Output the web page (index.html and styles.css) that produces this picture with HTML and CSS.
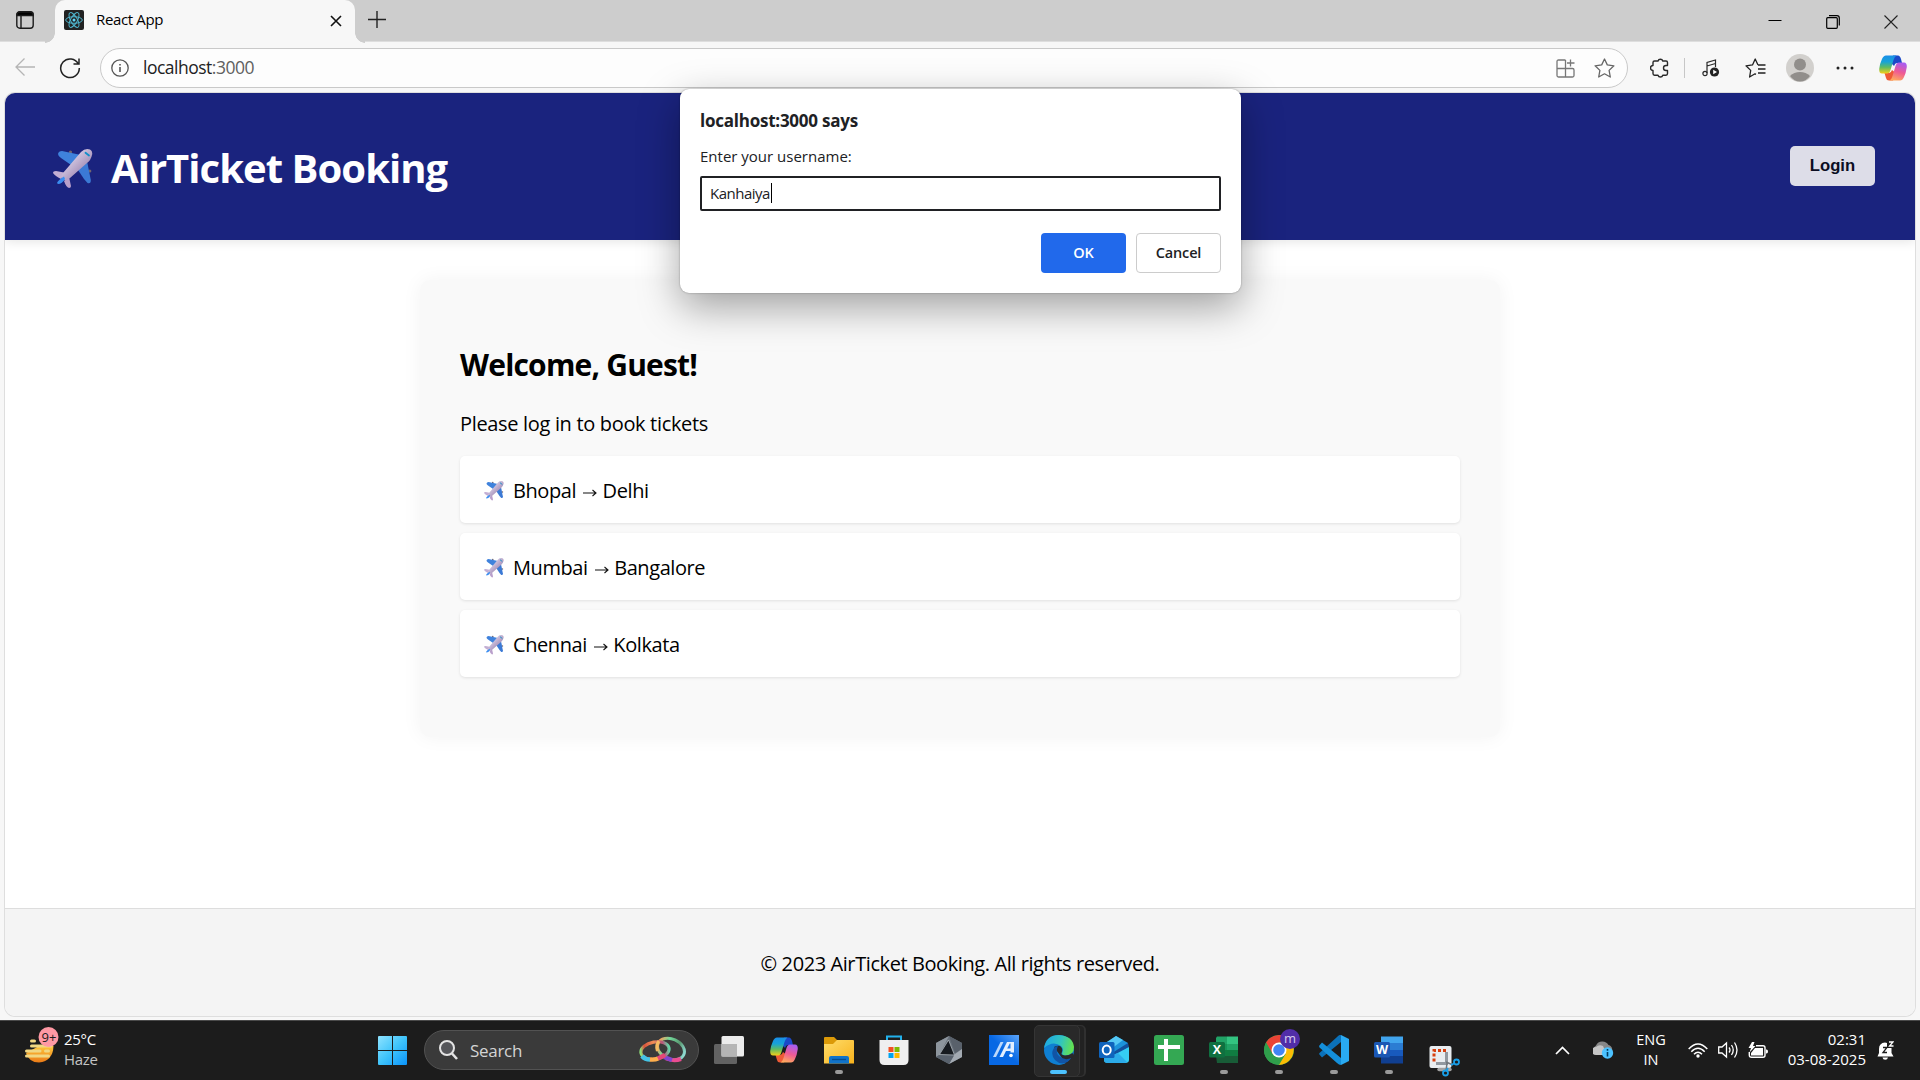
FILE: index.html
```html
<!DOCTYPE html>
<html lang="en">
<head>
<meta charset="utf-8">
<title>React App</title>
<link rel="stylesheet" href="styles.css">
</head>
<body>
<svg class="defs" width="0" height="0">
  <defs>
    <linearGradient id="body" x1="0" y1="0" x2="1" y2="1"><stop offset="0.3" stop-color="#d6cbe4"/><stop offset="0.7" stop-color="#a48fb8"/></linearGradient>
    <linearGradient id="cpA" x1="0" y1="0" x2="0" y2="1"><stop offset="0" stop-color="#1a8ee8"/><stop offset=".35" stop-color="#17a3d8"/><stop offset=".65" stop-color="#5dbb63"/><stop offset="1" stop-color="#f4cf19"/></linearGradient>
    <linearGradient id="cpB" x1=".6" y1="0" x2=".3" y2="1"><stop offset="0" stop-color="#a95df0"/><stop offset=".5" stop-color="#ef5a94"/><stop offset="1" stop-color="#ffab5c"/></linearGradient>
    <symbol id="plane" viewBox="0 0 40 40">
      <circle cx="17.500" cy="3" r="1.600" fill="#71656f"/><circle cx="36.800" cy="22" r="1.600" fill="#71656f"/>
      <path d="M5 5Q5.500 2 9 2L28 6 21 18 8 9Q5 7 5 5Z" fill="#3f82dc"/>
      <path d="M34 12 37.800 31Q38 35 34.500 34L31 30 23 18Z" fill="#3b79d5"/>
      <path d="M0 24Q0 22 3 22L11 23.500 8 30Q2 27 0 24Z" fill="#c2aed3"/>
      <path d="M11 32 16 28 18 37Q18 39 16 39 13 38 11 32Z" fill="#b99fcb"/>
      <path d="M28 3Q32-1 37 .500 40 2 39 6 38 11 34 14L17 29Q13 32 9 31 7 28 10 24Z" fill="url(#body)"/>
      <path d="M4 34Q5 31 11 27.500L12 30Q9 35 5 35Z" fill="#3a8df0"/>
      <path d="M32.500 3.800 36 6.500" stroke="#128fc9" stroke-width="1.800" stroke-linecap="round"/>
    </symbol>
    <symbol id="copilot" viewBox="0 0 28 26">
      <path d="M14 .500H19Q21 .500 22 4L23 8H18Q16 8 15 11L11 7Z" fill="#1b49c8"/>
      <path d="M14 25.500H10Q7.500 25.500 7 23L5.500 18H10Q12 18 13 15L18 19Z" fill="#ee5a36"/>
      <path d="M7 .500H17.500Q15.500 1.500 14.500 5L11.500 15Q10.500 18.500 8 18.500H3Q0 18.500 .200 14 1 8 3 4 4.500 .500 7 .500Z" fill="url(#cpA)"/>
      <path d="M21 25.500H10.500Q12.500 24.500 13.500 21L16.500 11Q17.500 7.500 20 7.500H25Q28 7.500 27.800 12 27 18 25 22 23.500 25.500 21 25.500Z" fill="url(#cpB)"/>
    </symbol>
  </defs>
</svg>

<header class="tabstrip">
  <div class="tab-actions">
    <svg width="18" height="18" viewBox="0 0 18 18" fill="none" stroke="#1b1b1b" stroke-width="1.400"><rect x=".8" y=".8" width="16.400" height="16.400" rx="3"/><path d="M1 3.500Q1 1 4 1H14Q17 1 17 3.500V4.500H1Z" fill="#000"/><path d="M5 5V17"/></svg>
  </div>
  <div class="tab">
    <svg class="favicon" width="20" height="20" viewBox="0 0 20 20"><rect width="20" height="20" rx="2" fill="#222"/><g fill="none" stroke="#4fb4cc" stroke-width="1"><ellipse cx="10" cy="10" rx="8.300" ry="3.300"/><ellipse cx="10" cy="10" rx="8.300" ry="3.300" transform="rotate(60 10 10)"/><ellipse cx="10" cy="10" rx="8.300" ry="3.300" transform="rotate(120 10 10)"/></g><circle cx="10" cy="10" r="1.500" fill="#61dafb"/></svg>
    <span class="tab-title">React App</span>
    <svg class="tab-close" width="12" height="12" viewBox="0 0 12 12" stroke="#111" stroke-width="1.600"><path d="M1 1 11 11M11 1 1 11"/></svg>
  </div>
  <svg class="new-tab" width="18" height="18" viewBox="0 0 18 18" stroke="#222" stroke-width="1.400"><path d="M9 0V17M0 8.500H18"/></svg>
  <div class="window-controls">
    <svg width="14" height="14" viewBox="0 0 14 14" fill="none" stroke="#000"><path d="M.500 5.500H13.500"/></svg>
    <svg width="14" height="14" viewBox="0 0 14 14" fill="none" stroke="#000" stroke-width="1.200"><rect x=".7" y="2.700" width="10.600" height="10.600" rx="1"/><path d="M3 .7H11Q13.300 .7 13.300 3V10.500"/></svg>
    <svg width="14" height="14" viewBox="0 0 14 14" fill="none" stroke="#222" stroke-width="1.100"><path d="M.500 .500 13.500 13.500M13.500 .500 .500 13.500"/></svg>
  </div>
</header>

<nav class="toolbar">
  <svg class="back" width="20" height="18" viewBox="0 0 20 18" fill="none" stroke="#b5b5b5" stroke-width="1.300"><path d="M20 9H1M9.500 .500 1 9 9.500 17.500"/></svg>
  <svg class="reload" width="22" height="22" viewBox="0 0 22 22" fill="none" stroke="#222" stroke-width="1.500"><path d="M19.300 7A9.300 9.300 0 1 0 20.300 11M20 1.500V7H14.500"/></svg>
  <div class="address">
    <svg width="18" height="18" viewBox="0 0 18 18" fill="none" stroke="#555" stroke-width="1.300"><circle cx="9" cy="9" r="8.200"/><path d="M9 8V13M9 5V6.500" stroke-width="1.600"/></svg>
    <span class="url">localhost<span class="port">:3000</span></span>
    <svg class="apps" width="19" height="19" viewBox="0 0 19 19" fill="none" stroke="#777" stroke-width="1.300"><path d="M9.500 1H2.500Q1 1 1 2.500V16.500Q1 18 2.500 18H16.500Q18 18 18 16.500V11Q18 9.500 16.500 9.500H1M9.500 1V18M14.500 .500V7.500M11 4H18.500"/></svg>
    <svg class="star" width="21" height="20" viewBox="0 0 21 20" fill="none" stroke="#666" stroke-width="1.300" stroke-linejoin="round"><path d="M10.500 1 13.300 6.900 19.900 7.800 15.100 12.400 16.300 19 10.500 15.800 4.700 19 5.900 12.400 1.100 7.800 7.700 6.900Z"/></svg>
  </div>
  <div class="tools">
    <svg width="20" height="20" viewBox="0 0 20 20" fill="none" stroke="#2a2a2a" stroke-width="1.400" stroke-linejoin="round"><path d="M4.500 3H8A2.500 2.500 0 0 1 12.800 3H16Q17.500 3 17.500 4.500V7.500H16A2.500 2.500 0 0 0 16 12.500H17.500V15.500Q17.500 17.200 16 17.200H12.800A2.500 2.500 0 0 1 8 17.200H4.500Q3 17.200 3 15.500V12.500A2.500 2.500 0 0 1 3 7.500V4.500Q3 3 4.500 3Z"/></svg>
    <i class="divider"></i>
    <svg class="music" width="18" height="18" viewBox="0 0 18 18" fill="none" stroke="#2a2a2a" stroke-width="1.200"><path d="M5 14V3.500L13.500 1V8M5 7 13.500 4.500"/><circle cx="3" cy="14.500" r="2.100"/><circle cx="12.500" cy="13" r="4.600" fill="#222" stroke="none"/><path d="M11.200 10.800 15 13 11.200 15.200Z" fill="#fff" stroke="none"/></svg>
    <svg class="favs" width="21" height="20" viewBox="0 0 21 20" fill="none" stroke="#222" stroke-width="1.300" stroke-linejoin="round"><path d="M13 7 10.200 1 7.500 6.900 1 7.800 5.700 12.400 4.600 19 10 15.800 11 16.300M13 11H20.500M13 15H20.500M13 7H20.500"/></svg>
    <svg class="avatar" width="28" height="28" viewBox="0 0 28 28"><circle cx="14" cy="14" r="14" fill="#d2d0cd"/><circle cx="14" cy="10.500" r="6" fill="#918e8b"/><path d="M4 22Q8 18 14 18T24 22Q20 27.500 14 27.500T4 22Z" fill="#918e8b"/></svg>
    <svg class="more" width="18" height="4" viewBox="0 0 18 4" fill="#222"><circle cx="2" cy="2" r="1.500"/><circle cx="9" cy="2" r="1.500"/><circle cx="16" cy="2" r="1.500"/></svg>
    <svg class="copilot" width="28" height="26"><use href="#copilot"/></svg>
  </div>
</nav>

<main class="viewport">
  <section class="page">
    <header class="app-header">
      <h1 class="brand"><svg width="40" height="40"><use href="#plane"/></svg><span>AirTicket Booking</span></h1>
      <button class="login">Login</button>
    </header>
    <div class="content">
      <article class="card">
        <h2>Welcome, Guest!</h2>
        <p>Please log in to book tickets</p>
        <ul class="flights">
          <li><svg width="20" height="20"><use href="#plane"/></svg><span>Bhopal</span><svg class="arrow" width="14" height="8" viewBox="0 0 14 8"><path d="M0 4H12.500M9.500 1 13 4 9.500 7" fill="none" stroke="#111" stroke-width="1.100"/></svg><span>Delhi</span></li>
          <li><svg width="20" height="20"><use href="#plane"/></svg><span>Mumbai</span><svg class="arrow" width="14" height="8" viewBox="0 0 14 8"><path d="M0 4H12.500M9.500 1 13 4 9.500 7" fill="none" stroke="#111" stroke-width="1.100"/></svg><span>Bangalore</span></li>
          <li><svg width="20" height="20"><use href="#plane"/></svg><span>Chennai</span><svg class="arrow" width="14" height="8" viewBox="0 0 14 8"><path d="M0 4H12.500M9.500 1 13 4 9.500 7" fill="none" stroke="#111" stroke-width="1.100"/></svg><span>Kolkata</span></li>
        </ul>
      </article>
    </div>
    <footer class="app-footer">© 2023 AirTicket Booking. All rights reserved.</footer>
  </section>
</main>

<div class="dialog" role="dialog">
  <div class="dialog-title">localhost:3000 says</div>
  <div class="dialog-message">Enter your username:</div>
  <div class="dialog-input"><span>Kanhaiya</span><i class="caret"></i></div>
  <div class="dialog-buttons"><button class="ok">OK</button><button class="cancel">Cancel</button></div>
</div>

<footer class="taskbar">
  <div class="weather">
    <svg width="34" height="36" viewBox="0 0 34 36"><defs><linearGradient id="sun" x1="0" y1="0" x2="0" y2="1"><stop offset="0" stop-color="#ffc83d"/><stop offset="1" stop-color="#ea7a17"/></linearGradient></defs><path d="M1 26Q4 35.500 14 35.500 28 34 28.500 19H14Z" fill="url(#sun)"/><g stroke="#f1d782" stroke-width="3" stroke-linecap="round"><path d="M6.500 14H9.500M6.500 19H26M1.500 24H15M20.500 24H23.500M1.500 29H23.500"/></g><circle cx="23.500" cy="10" r="10" fill="#ff99a4"/></svg>
    <span class="badge">9+</span>
    <div class="weather-text"><span>25°C</span><span class="haze">Haze</span></div>
  </div>
  <svg class="start" width="29" height="29" viewBox="0 0 29 29"><defs><linearGradient id="win" x1="0" y1="0" x2="1" y2="1"><stop offset="0" stop-color="#8fe3ff"/><stop offset=".5" stop-color="#3fc4fb"/><stop offset="1" stop-color="#0a93fa"/></linearGradient></defs><path d="M0 1Q0 0 1 0H14V14H0ZM15 0H28Q29 0 29 1V14H15ZM0 15H14V29H1Q0 29 0 28ZM15 15H29V28Q29 29 28 29H15Z" fill="url(#win)"/></svg>
  <div class="search">
    <svg width="19" height="20" viewBox="0 0 19 20" fill="#55565a" stroke="#e4e4e4" stroke-width="2"><circle cx="8" cy="8" r="7"/><path d="M13 13.500 18 19" stroke-width="2.600"/></svg>
    <span>Search</span>
    <svg class="rings" width="48" height="28" viewBox="0 0 48 28" fill="none"><defs><linearGradient id="r1"><stop offset="0" stop-color="#8fdc78"/><stop offset=".15" stop-color="#d8543c"/><stop offset=".5" stop-color="#ef8e58"/><stop offset=".8" stop-color="#b9537a"/><stop offset="1" stop-color="#62d6a6"/></linearGradient><linearGradient id="r2"><stop offset="0" stop-color="#f6a05b"/><stop offset=".3" stop-color="#72d99b"/><stop offset=".7" stop-color="#5a9a72"/><stop offset="1" stop-color="#8ed9cf"/></linearGradient></defs><ellipse cx="32" cy="13" rx="14" ry="10" transform="rotate(24 32 13)" stroke="url(#r2)" stroke-width="3"/><path d="M27 22.500Q35 25.500 42 23" stroke="#ea4d91" stroke-width="4"/><path d="M25 21 33 24" stroke="#8045cf" stroke-width="4.500"/><ellipse cx="16" cy="14.500" rx="14.200" ry="8.500" transform="rotate(-10 16 14.500)" stroke="url(#r1)" stroke-width="3.200"/><path d="M3 20Q6 23.500 11 23.500" stroke="#43c4e6" stroke-width="4.500"/><path d="M11 23.500Q16 24 19 22.500" stroke="#ffaf4d" stroke-width="4.500"/><path d="M19 22.500 26 19" stroke="#e54778" stroke-width="4.500"/><path d="M18.500 15Q16.500 9 20 5" stroke="#f4bb62" stroke-width="3.200"/></svg>
  </div>
  <div class="apps-row">
    <div class="app"><svg width="30" height="28" viewBox="0 0 30 28"><rect y="8" width="23" height="20" rx="1.500" fill="#626262"/><rect x="7.500" width="22.500" height="20.500" rx="1.500" fill="#ececec"/><path d="M7.500 8H23V20.500H7.500Z" fill="#b5b5b5"/></svg></div>
    <div class="app"><svg width="28" height="26"><use href="#copilot"/></svg></div>
    <div class="app run"><svg width="30" height="28" viewBox="0 0 30 28"><defs><linearGradient id="fold" x1="0" y1="0" x2="1" y2="1"><stop offset="0" stop-color="#ffdd6b"/><stop offset="1" stop-color="#f8b21c"/></linearGradient></defs><path d="M0 2Q0 1 1 1H10L13 4V10H0Z" fill="#dc9a08"/><path d="M0 8H9L13 4H29Q30 4 30 5V27.500H0Z" fill="url(#fold)"/><path d="M5 27.500V22Q5 20 7 20H23Q25 20 25 22V27.500Z" fill="#1173c9"/><path d="M8 23.500H22" stroke="#064d90" stroke-width="1.300"/></svg></div>
    <div class="app"><svg width="30" height="30" viewBox="0 0 30 30"><path d="M8 7V1.500H22V7" fill="none" stroke="#22b1ec" stroke-width="2"/><path d="M.500 5H29.500V25Q29.500 30 24.500 30H5.500Q.500 30 .500 25Z" fill="#efefef"/><path d="M9.500 12H14.500V17H9.500Z" fill="#f25022"/><path d="M15.500 12H20.500V17H15.500Z" fill="#7fba00"/><path d="M9.500 18H14.500V23H9.500Z" fill="#00a4ef"/><path d="M15.500 18H20.500V23H15.500Z" fill="#ffb900"/></svg></div>
    <div class="app"><svg width="26" height="28" viewBox="0 0 26 28"><path d="M13 0 26 7V21L13 28 0 21V7Z" fill="#68717b"/><path d="M13 0 0 7V21L3.500 18.500Z" fill="#8d959d"/><path d="M13 0 26 7V13L19 17Z" fill="#59616b"/><path d="M26 13V21L13 28 19 18Z" fill="#a3aab2"/><path d="M0 21 3.500 19 18 19 13 28Z" fill="#59626d"/><path d="M12.500 4 3.500 18.500 18.500 19Z" fill="#171b20" stroke="#b9c0c6" stroke-width=".7"/></svg></div>
    <div class="app"><svg width="30" height="30" viewBox="0 0 30 30"><defs><linearGradient id="asus" x1="0" y1="1" x2="1" y2="0"><stop offset=".5" stop-color="#0768e4"/><stop offset="1" stop-color="#5ba4f8"/></linearGradient></defs><path d="M0 0H30V30H0Z" fill="url(#asus)"/><path d="M4 22 11.500 7H14.500L7 22Z" fill="#bcd8fb"/><path d="M10.500 22 18 7H25V17.500H21.500V16H17L14 22ZM18.200 13.500H21.500V8.500H20.700Z" fill="#e3efff"/><circle cx="22" cy="20.500" r="1.800" fill="#fff"/></svg></div>
    <div class="app active"><svg width="30" height="30" viewBox="0 0 30 30"><defs><linearGradient id="eg" y1=".3" y2=".5"><stop offset="0" stop-color="#1da7e5"/><stop offset=".55" stop-color="#32c5be"/><stop offset="1" stop-color="#66e34a"/></linearGradient></defs><circle cx="15" cy="15" r="15" fill="#0f7fd2"/><path d="M0 13Q2 0 15 0 29 1 30 12 30 20 21 20.500 17 20 18.500 17 20 14 17 11 9 5 0 13Z" fill="url(#eg)"/><path d="M10 12Q13 10 16 11 19 13 18 17 16 20 21 20.500 25 20.500 28.500 18L30 21 28 30H23Z" fill="#292929"/><path d="M10 13Q6 19 11 25 17 31 24.500 26.500L27.500 23Q20 26 15 21 11 17 14 11Q11 11 10 13Z" fill="#1154a5"/><path d="M27.500 23Q24 28 18 30H30V20Z" fill="#292929"/></svg></div>
    <div class="app"><svg width="30" height="28" viewBox="0 0 30 28"><path d="M5 8 17 0 29 7V15L17 22 5 15Z" fill="#1c93db"/><path d="M5 8 17 0 24 4 12 13Z" fill="#54c8f5"/><path d="M13 17 29 7 30 11 17 20Z" fill="#12519e"/><path d="M30 11V24Q30 27 26 27H9Q5 27 5 24V17L13 20Z" fill="#35cdf3"/><path d="M5 22 19 17 28 26Q27 27 25 27H9Q5 27 5 24Z" fill="#2cabe9"/><rect y="6" width="15.500" height="16" rx="1.500" fill="#0f64bd"/><ellipse cx="7.700" cy="14" rx="4" ry="4.500" fill="none" stroke="#fff" stroke-width="2"/></svg></div>
    <div class="app"><svg width="30" height="30" viewBox="0 0 30 30"><rect width="30" height="30" rx="2.500" fill="#34a853"/><path d="M4 12H26M12 4V26" stroke="#fff" stroke-width="4"/></svg></div>
    <div class="app run office excel"><svg width="30" height="28" viewBox="0 0 30 28"><path d="M8 .500H18V9H7V2Z" fill="#21a366"/><path d="M18 .500H29V9H18Z" fill="#33c481"/><path d="M7 8H18V15H7Z" fill="#169457"/><path d="M18 8H29V15H18Z" fill="#21a366"/><path d="M7 14H29V21H7Z" fill="#107c41"/><path d="M7 20H29V27H8Z" fill="#185c37"/><rect y="6" width="16" height="15.500" rx="1.500" fill="#0f7040"/></svg><b>X</b></div>
    <div class="app run chrome"><svg width="30" height="30" viewBox="0 0 30 30"><circle cx="15" cy="15" r="15" fill="#34a853"/><path d="M2 7.500Q6 .500 15 0 24 0 28 7.500H15L8.500 19Z" fill="#ea4335"/><path d="M15 7.500H28Q31.500 14 28 22 23 30 14 30L21.500 19Z" fill="#fbbc04"/><path d="M2 7.500 8.500 19 15 22.500 21.500 19 15 30Q4 29.500 .500 19-.500 12 2 7.500Z" fill="#2f9e4b"/><circle cx="15" cy="15" r="7.500" fill="#fff"/><circle cx="15" cy="15" r="5.800" fill="#4285f4"/></svg><span class="profile">m</span></div>
    <div class="app run"><svg width="30" height="30" viewBox="0 0 30 30"><path d="M0 19 3 22.500 22 7V0Q20-.500 18 2L.500 18Z" fill="#0b71b9"/><path d="M0 11 3 7.500 22 23V30Q20 30 18 28L.500 12.500Z" fill="#148fda"/><path d="M22 0 30 4V26L22 30Z" fill="#29aaf2"/></svg></div>
    <div class="app run office word"><svg width="30" height="28" viewBox="0 0 30 28"><path d="M7 .500H29V8H7Z" fill="#41a5ee"/><path d="M7 7H29V15H7Z" fill="#2b7cd3"/><path d="M7 14H29V21H7Z" fill="#185abd"/><path d="M7 20H29V27.500H7Z" fill="#103f91"/><rect y="6" width="16" height="15.500" rx="1.500" fill="#1b57b4"/></svg><b>W</b></div>
    <div class="app snip"><svg width="31" height="31" viewBox="0 0 31 31"><rect x=".5" width="22" height="22" rx="2" fill="#e9edf0"/><path d="M5 15.500V4.500H17" fill="none" stroke="#d8400f" stroke-width="3" stroke-dasharray="3 2"/><path d="M10 23.500H21" stroke="#a2a2a2" stroke-width="3.500" stroke-linecap="round"/><path d="M17.500 6V18M7 17.500H19" stroke="#9299a0" stroke-width="3" fill="none"/><path d="M17 16 24 19M18 17 17 25" stroke="#70767c" stroke-width="1.500"/><g fill="none" stroke="#19a0ea" stroke-width="1.800"><circle cx="27.500" cy="16" r="2.500"/><circle cx="16.500" cy="27" r="2.500"/><path d="M25 17.500 22 19M17.500 24.500 19 22"/></g></svg></div>
  </div>
  <div class="tray">
    <svg width="15" height="9" viewBox="0 0 15 9" fill="none" stroke="#fff" stroke-width="1.700"><path d="M1 8 7.500 1.500 14 8"/></svg>
    <svg class="cloud" width="21" height="18" viewBox="0 0 21 18"><path d="M4 12A4 4 0 0 1 3 4.500 7 7 0 0 1 15.500 4 5 5 0 0 1 17 13Z" fill="#878787"/><path d="M3 14A3.500 3.500 0 0 1 3 6 6 6 0 0 1 10 5L14 14Z" fill="#c5c5c5"/><circle cx="14.500" cy="12" r="5.700" fill="#4cc2ff"/><path d="M14.500 11V15.500M14.500 8V9.700" stroke="#003d62" stroke-width="1.600"/></svg>
    <div class="lang"><span>ENG</span><span>IN</span></div>
    <svg class="wifi" width="20" height="15" viewBox="0 0 20 15" fill="none" stroke="#fff" stroke-width="1.500"><path d="M.7 6Q10-4 19.300 6M3.300 8.700Q10 1.700 16.700 8.700M6 11.300Q10 7 14 11.300"/><circle cx="10" cy="13" r="1.700" fill="#fff" stroke="none"/></svg>
    <svg class="sound" width="20" height="18" viewBox="0 0 20 18" fill="none" stroke="#fff" stroke-width="1.300"><path d="M.7 6H4L8.500 2V16L4 12H.7ZM11 6.500Q13 9 11 11.500M13.500 4Q17 9 13.500 14M16.500 1.500Q21.500 9 16.500 16.500"/></svg>
    <svg class="battery" width="20" height="17" viewBox="0 0 20 17"><path d="M8 3.700H15Q17 3.700 17 5.700V13.300Q17 15.300 15 15.300H3.500Q1.300 15.300 1.300 13V10" fill="none" stroke="#fff" stroke-width="1.400"/><path d="M7 6H15V13.500H3V11Z" fill="#fff"/><path d="M18 7.500H18.500Q20 7.500 20 9.500T18.500 11.500H18Z" fill="#fff"/><path d="M4 0 .500 6H3L1.500 10.500 7.500 4H5L6.500 0Z" fill="#fff"/></svg>
    <div class="clock"><span>02:31</span><span>03-08-2025</span></div>
    <svg class="bell" width="17" height="19" viewBox="0 0 17 19"><path d="M2 8Q2 2 8 1.500L10 2V7H14.500V12L16.500 15.500H.500L2 12ZM5.500 16.500H11Q10.500 18.800 8.200 18.800T5.500 16.500Z" fill="#fff"/><path d="M12 1H16L12.500 5H16.500" fill="none" stroke="#fff" stroke-width="1.300"/><path d="M6 6.500H10L6 11.500H10" fill="none" stroke="#1c1c1c" stroke-width="1.300"/></svg>
  </div>
</footer>
</body>
</html>
```
FILE: styles.css
```css
* { box-sizing: border-box; }
body { margin: 0; width: 1920px; height: 1080px; overflow: hidden; display: flex; flex-direction: column; background: #f7f7f7; color: #000; font-family: "Open Sans", "Noto Sans", sans-serif; font-size: 20px; }
svg { display: block; flex: none; }
.defs { position: absolute; }
button { font-family: inherit; padding: 0; }

/* Browser chrome */
.tabstrip { height: 42px; background: #cdcdcd; display: flex; flex: none; box-shadow: inset 0 -1px #dedede; }
.tab-actions { width: 55px; padding: 11px 0 0 16px; }
.tab { position: relative; width: 300px; height: 43px; background: #f7f7f7; border-radius: 10px 10px 0 0; display: flex; align-items: flex-start; padding: 10px 13px 0 9px; }
.tab::before, .tab::after { content: ""; position: absolute; bottom: 0; width: 10px; height: 10px; }
.tab::before { left: -10px; background: radial-gradient(circle at 0 0, #cdcdcd 9.5px, #f7f7f7 10px); }
.tab::after { right: -10px; background: radial-gradient(circle at 100% 0, #cdcdcd 9.5px, #f7f7f7 10px); }
.tab-title { margin: -1px 0 0 12px; font-size: 15px; line-height: 20px; letter-spacing: -.35px; }
.tab-close { margin: 5px 0 0 auto; }
.new-tab { margin: 11px 0 0 13px; }
.window-controls { margin: 15px 22px 0 auto; display: flex; gap: 44px; }
.toolbar { height: 51px; flex: none; display: flex; align-items: flex-start; padding-top: 6px; }
.back { margin: 10px 0 0 15px; }
.reload { margin: 9px 0 0 24px; }
.address { width: 1528px; height: 40px; margin-left: 19px; border: 1px solid #c9c9c9; border-radius: 20px; background: #fdfdfd; display: flex; align-items: center; padding: 0 12px 0 10px; }
.url { margin: -2px 0 0 14px; font-size: 17.5px; letter-spacing: -.5px; color: #222; }
.port { color: #606060; }
.apps { margin-left: auto; }
.star { margin-left: 19px; }
.tools { flex: 1; height: 40px; display: flex; align-items: center; padding-left: 22px; }
.divider { width: 1px; height: 20px; background: #c7c7c7; margin-left: 14px; }
.music { margin-left: 17px; }
.favs { margin-left: 25px; }
.avatar { margin-left: 20px; }
.more { margin-left: 22px; }
.copilot { margin-left: 25px; }

/* Web page */
.viewport { height: 927px; flex: none; padding: 0 5px 4px; }
.page { height: 923px; background: #fff; border-radius: 10px; overflow: hidden; box-shadow: 0 0 0 1px #dedede; display: flex; flex-direction: column; }
.app-header { height: 147px; flex: none; background: #1a237e; color: #fff; display: flex; align-items: center; justify-content: space-between; padding: 0 40px 0 48px; box-shadow: 0 2px 10px rgba(0,0,0,.1); }
.brand { margin: 2px 0 0; font-size: 40px; line-height: 54px; letter-spacing: -.95px; display: flex; align-items: center; gap: 18px; white-space: nowrap; }
.brand svg { margin-top: 3px; }
.login { width: 85px; height: 40px; margin-bottom: 2px; border: 0; border-radius: 5px; background: #dddde8; color: #0b0d22; font: bold 16.67px "Liberation Sans", Arial, sans-serif; }
.content { flex: 1; display: flex; justify-content: center; align-items: flex-start; padding-top: 40px; }
.card { width: 1080px; height: 457px; background: #f9f9f9; border-radius: 10px; box-shadow: 0 0 20px rgba(0,0,0,.05); padding: 65px 40px 0; }
.card h2 { margin: 0; font-size: 30px; line-height: 40px; letter-spacing: -.8px; }
.card p { margin: 25px 0 19px; line-height: 27px; letter-spacing: -.33px; }
.flights { list-style: none; margin: 0; padding: 0; display: flex; flex-direction: column; gap: 10px; letter-spacing: -.42px; }
.flights li { height: 67px; border-radius: 5px; background: #fff; box-shadow: 0 1px 3px rgba(0,0,0,.1); display: flex; align-items: center; padding: 2px 0 0 23.5px; }
.flights svg + span { margin-left: 9.5px; }
.flights .arrow { margin: 5px 0 0 7px; }
.flights .arrow + span { margin-left: 5.5px; }
.app-footer { height: 108px; flex: none; background: #f4f4f4; border-top: 1px solid #ddd; text-align: center; line-height: 110px; letter-spacing: -.41px; }

/* Prompt dialog */
.dialog { position: absolute; left: 680px; top: 89px; width: 561px; height: 204px; border-radius: 9px; background: #fff; color: #202124; padding: 19px 20px; box-shadow: 0 0 2px rgba(0,0,0,.35), 0 14px 40px rgba(0,0,0,.36); }
.dialog-title { font-size: 17px; font-weight: 700; line-height: 26px; letter-spacing: -.24px; }
.dialog-message { margin-top: 11px; font-size: 15px; line-height: 22px; }
.dialog-input { margin-top: 9px; height: 35px; border: 2px solid #202124; border-radius: 2px; display: flex; align-items: center; padding: 0 0 2px 8px; font-size: 15px; letter-spacing: -.5px; }
.caret { width: 1px; height: 20px; margin-left: 1px; background: #000; }
.dialog-buttons { display: flex; justify-content: flex-end; gap: 10px; margin-top: 22px; }
.dialog-buttons button { width: 85px; height: 40px; border-radius: 4px; padding-bottom: 2px; font-size: 14.5px; font-weight: 600; letter-spacing: -.15px; }
.ok { background: #2169eb; border: 0; color: #fff; }
.cancel { background: #fff; border: 1px solid #ccc; color: #202124; }

/* Taskbar */
.taskbar { position: relative; height: 60px; flex: none; background: #1c1c1c; border-top: 1px solid #4a4a4a; color: #fff; display: flex; align-items: flex-start; font-size: 15px; }
.weather { position: relative; width: 378px; display: flex; padding: 6px 0 0 25px; }
.badge { position: absolute; left: 39px; top: 6px; width: 20px; text-align: center; color: #1c1c1c; font-size: 13px; line-height: 20px; }
.weather-text { margin: 2px 0 0 5px; line-height: 20px; letter-spacing: -.3px; display: flex; flex-direction: column; align-items: flex-start; }
.haze { color: #c4c4c4; }
.start { margin-top: 15px; }
.search { width: 275px; height: 40px; margin: 9px 0 0 17px; border: 1px solid #525252; border-radius: 20px; background: #3a3a3a; display: flex; align-items: center; padding: 0 11px 0 14px; font-size: 17px; letter-spacing: -.3px; color: #d4d4d4; }
.search span { margin-left: 12px; }
.rings { margin-left: auto; }
.apps-row { display: flex; margin-left: 2px; }
.app { position: relative; width: 55px; height: 58px; display: flex; align-items: center; justify-content: center; }
.run::after { content: ""; position: absolute; left: 24px; top: 49px; width: 8px; height: 4px; border-radius: 2px; background: #9a9a9a; }
.active::before { content: ""; position: absolute; left: 3px; top: 4px; width: 44px; height: 50px; border: 1px solid #353535; border-radius: 5px; background: #292929; box-shadow: 5px 0 0 -1px #222, 6px 0 0 #303030; z-index: -1; }
.active { z-index: 0; }
.active::after { content: ""; position: absolute; left: 19px; top: 49px; width: 17px; height: 4px; border-radius: 2px; background: #4cc2ff; }
.office b { position: absolute; left: 13px; top: 21px; width: 16px; text-align: center; font-size: 12.5px; line-height: 16px; }
.profile { position: absolute; left: 29px; top: 8px; width: 20px; height: 20px; border-radius: 50%; background: #512da8; color: #d5caee; text-align: center; font-size: 13px; line-height: 18px; }
.snip { padding: 23px 0 0 1px; }
.tray { position: absolute; right: 26px; top: 0; height: 58px; display: flex; align-items: center; }
.cloud { margin-left: 23px; }
.lang { width: 36px; margin-left: 19px; display: flex; flex-direction: column; align-items: center; line-height: 20px; font-size: 14.5px; }
.wifi { margin-left: 19px; }
.sound { margin-left: 10px; }
.battery { margin-left: 10px; }
.clock { width: 80px; margin: -3px 0 0 18px; display: flex; flex-direction: column; align-items: flex-end; line-height: 20px; }
.bell { margin-left: 11px; }
```
